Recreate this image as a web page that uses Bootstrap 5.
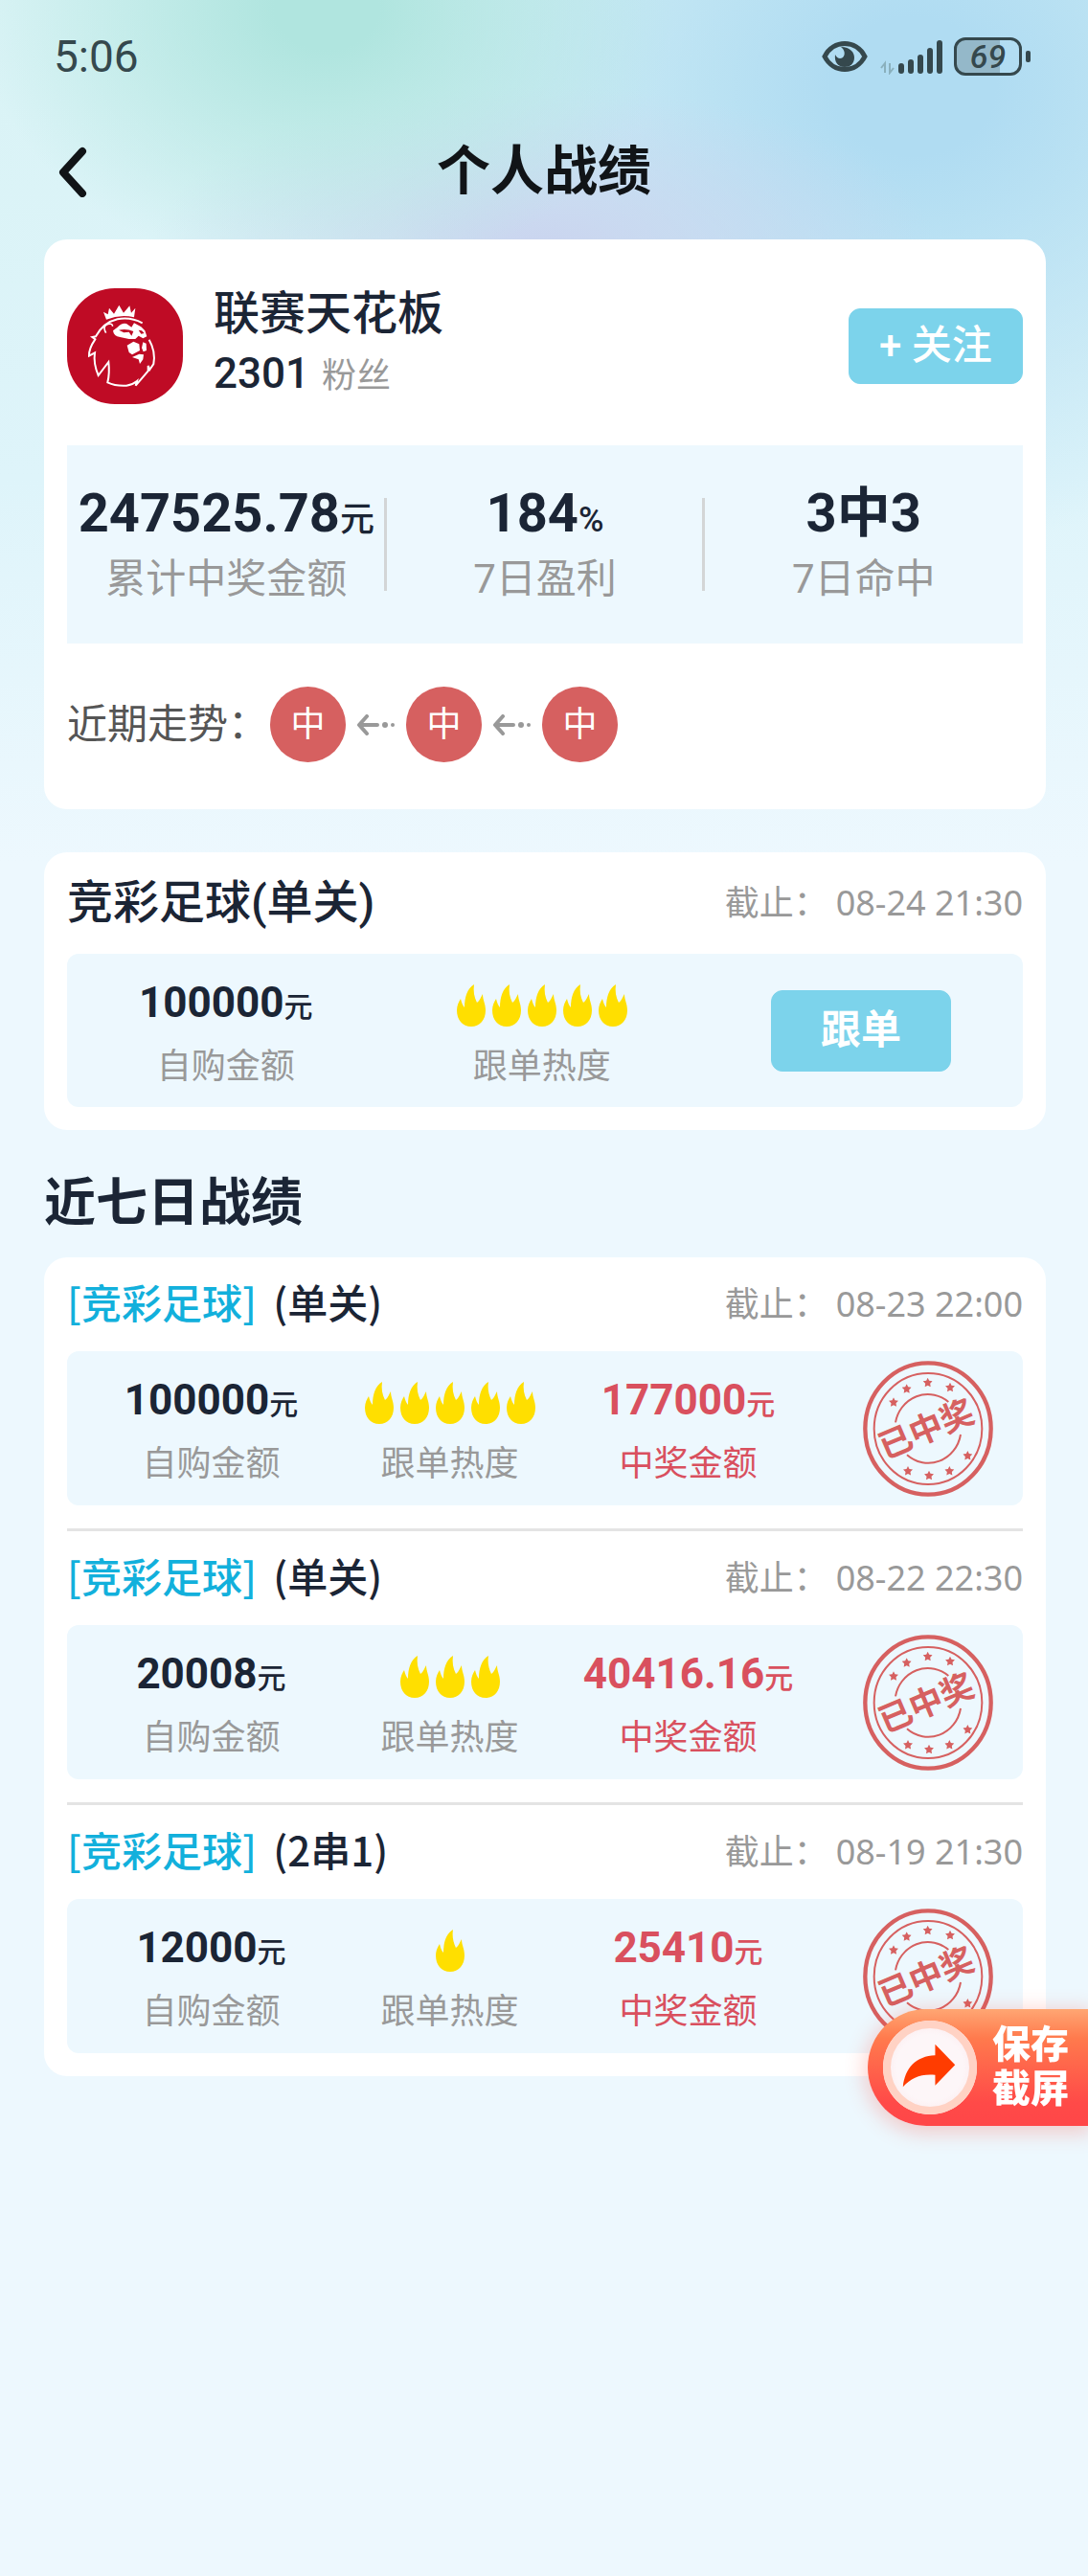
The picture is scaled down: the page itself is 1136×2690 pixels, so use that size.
<!DOCTYPE html>
<html lang="zh-CN">
  <head>
    <meta charset="UTF-8" />
    <meta name="viewport" content="width=device-width, initial-scale=1.0" />
    <title>个人战绩</title>
    <link
      href="https://cdn.jsdelivr.net/npm/bootstrap@5.3.0/dist/css/bootstrap.min.css"
      rel="stylesheet"
    />
    <style>
      body {
        font-family: Roboto, "Noto Sans CJK SC", sans-serif;
        font-size: 36px;
        line-height: 44px;
        color: #1b2535;
        background-color: #edf8fe;
        background-image:
          radial-gradient(ellipse 32% 280px at 30% 10px, #b0e5df 15%, #b0e5df00),
          radial-gradient(ellipse 36% 170px at 50% 260px, #cad5ef 5%, #cad5ef00),
          radial-gradient(ellipse 50% 480px at 84% 90px, #b0dcf2 15%, #b0dcf200),
          linear-gradient(#d9f3f5, #def4fa 500px, #edf8fe 900px);
        background-repeat: no-repeat;
        min-height: 100vh;
      }

      /* keeps the smaller or larger inline text from growing its line */
      .num small,
      .total-num small,
      .fans strong {
        line-height: 0;
      }

      /* status bar */
      .status-bar {
        height: 118px;
        padding: 0 60px 0 56px;
        color: #35484d;
      }

      .clock {
        font-size: 46px;
        line-height: 60px;
      }

      .battery {
        width: 71px;
        height: 40px;
        border: 3px solid #35484d;
        border-radius: 12px;
        background: linear-gradient(90deg, #94b8c9 70%, transparent 70%);
        font-size: 34px;
        line-height: 34px;
        font-weight: 500;
        font-style: italic;
      }

      .battery-tip {
        width: 5px;
        height: 12px;
        border-radius: 2px;
        background-color: #35484d;
      }

      /* title bar */
      .title-bar {
        height: 122px;
        padding: 0 58px;
        color: #111417;
      }

      .title-bar h1 {
        font-size: 56px;
        line-height: 70px;
        font-weight: 700;
      }

      .back-btn,
      .title-space {
        width: 36px;
      }

      main {
        padding: 10px 44px 0 46px;
      }

      .panel {
        background-color: #fff;
        border-radius: 24px;
        padding: 0 24px 24px;
      }

      .profile {
        padding-top: 46px;
        padding-bottom: 49px;
        margin-bottom: 45px;
      }

      .avatar {
        width: 121px;
        height: 121px;
        border-radius: 50px;
        background-color: #bf0b25;
      }

      .user-name {
        font-size: 48px;
        line-height: 64px;
        font-weight: 500;
      }

      .fans {
        line-height: 66px;
      }

      .fans strong {
        font-size: 44px;
        font-weight: 500;
      }

      .gray {
        color: #999;
      }

      .deadline {
        font-family: "Noto Sans", "Noto Sans CJK SC", sans-serif;
      }

      .btn-sky {
        --bs-btn-color: #fff;
        --bs-btn-bg: #7cd3eb;
        --bs-btn-border-color: #7cd3eb;
        --bs-btn-hover-color: #fff;
        --bs-btn-hover-bg: #63c8e4;
        --bs-btn-hover-border-color: #63c8e4;
        --bs-btn-border-radius: 12px;
        --bs-btn-padding-y: 0;
        --bs-btn-font-size: 42px;
        --bs-btn-line-height: 60px;
      }

      .follow-btn {
        width: 182px;
        height: 79px;
        font-weight: 500;
      }

      .order-btn {
        width: 188px;
        height: 85px;
        font-weight: 700;
      }

      /* three totals */
      .totals {
        height: 207px;
        margin: 39px 0 45px;
        padding-top: 38px;
        background-color: #edf8fe;
      }

      .total-num {
        font-size: 56px;
        line-height: 66px;
        font-weight: 700;
        margin-bottom: 12px;
      }

      .total-num small {
        font-size: 36px;
        font-weight: 500;
      }

      .total-label {
        font-size: 42px;
        line-height: 48px;
      }

      .split {
        width: 3px;
        height: 97px;
        margin: 17px -1px 0 -2px;
        background-color: #d3d5d6;
      }

      /* recent trend */
      .trend {
        color: #555;
        font-size: 42px;
      }

      .trend-label {
        margin-right: 2px;
      }

      .hit {
        width: 79px;
        height: 79px;
        background-color: #d66060;
        color: #fff;
        font-size: 36px;
      }

      .trend svg {
        margin: 0 12px;
      }

      .panel-head {
        height: 106px;
      }

      .panel-head h2 {
        font-size: 48px;
        line-height: 60px;
        font-weight: 500;
      }

      .info-box {
        background-color: #edf8fe;
        border-radius: 12px;
        height: 160px;
      }

      .info-box > div {
        padding-top: 5px;
      }

      .num {
        font-size: 44px;
        line-height: 50px;
        font-weight: 700;
        margin-bottom: 20px;
      }

      .num small {
        font-size: 30px;
        font-weight: 500;
      }

      .flames {
        height: 50px;
        gap: 7px;
        margin-bottom: 20px;
      }

      .section-title {
        font-size: 54px;
        line-height: 70px;
        font-weight: 700;
        padding: 42px 0 21px;
      }

      /* one row of the seven day list */
      .record {
        padding-bottom: 24px;
      }

      .record + .record {
        border-top: 3px solid #e4e4e4;
      }

      .record:last-child {
        padding-bottom: 0;
      }

      .record-head {
        height: 98px;
      }

      .record-head h3 {
        font-family: "Noto Sans CJK SC", sans-serif;
        font-size: 42px;
        line-height: 56px;
        font-weight: 500;
        padding-bottom: 6px;
      }

      .record-head h3 span {
        color: #12b0dc;
        margin-right: 8px;
      }

      .record-grid {
        display: grid;
        grid-template-columns: 1fr 1fr 1fr 194px;
        height: 161px;
        padding: 0 31px 0 26px;
      }

      .win {
        color: #d9505e;
      }

      /* floating save button */
      .save-btn {
        right: 0;
        bottom: 470px;
        width: 230px;
        height: 122px;
        padding: 0 0 0 16px;
        border: 0;
        border-radius: 61px 0 0 61px;
        background: linear-gradient(#ffa673, #ff7a4d 25%, #ff4a48 80%, #ff4648);
        box-shadow: 0 4px 20px 4px #ff503c40;
        color: #fff;
        font-size: 40px;
        line-height: 46px;
        font-weight: 900;
      }

      .save-btn svg {
        border-radius: 50%;
        background: radial-gradient(#fdf6f8 50%, #fbdcdf);
        box-shadow: inset 0 0 0 8px #ffd2c4;
      }
    </style>
  </head>
  <body>
    <svg class="d-none">
      <symbol id="flame" viewBox="0 0 30 44">
        <path fill="#ffdf00" d="M18 0C17 7 18 13 21 19C24 17 25 13 27 10C27 16 30 20 30 27C30 37 24 44 15 44C6 44 0 37 0 27C0 22 2 18 4 15C5 19 6 22 8 24C8 13 11 4 18 0Z" />
      </symbol>
      <symbol id="star" viewBox="-10 -10 20 20">
        <path fill="#d66060" d="M0-10L3-4L10-3L5 2L6 9L0 6L-6 9L-5 2L-10-3L-3-4Z" />
      </symbol>
      <symbol id="stamp" viewBox="62 33 408 426">
        <g fill="none" stroke="#d66060">
          <ellipse cx="266" cy="246" rx="197" ry="206" stroke-width="13" />
          <ellipse cx="266" cy="246" rx="169" ry="174" stroke-width="6" />
          <path stroke-width="6" d="M164 226A103 108 0 0 1 330 162M200 328A103 108 0 0 0 368 264" />
        </g>
        <use href="#star" x="143" y="148" width="30" height="30" />
        <use href="#star" x="184" y="106" width="30" height="30" />
        <use href="#star" x="250" y="86" width="30" height="30" />
        <use href="#star" x="320" y="101" width="30" height="30" />
        <use href="#star" x="375" y="315" width="30" height="30" />
        <use href="#star" x="318" y="363" width="30" height="30" />
        <use href="#star" x="254" y="377" width="30" height="30" />
        <use href="#star" x="188" y="363" width="30" height="30" />
        <text x="260" y="284" text-anchor="middle" transform="rotate(-23 260 247)" font-size="104" font-weight="700" fill="#d66060">已中奖</text>
      </symbol>
      <symbol id="arrow" viewBox="0 0 39 22">
        <path d="M10 2L2 11L10 20M3 11H21" fill="none" stroke="#999" stroke-width="4" stroke-linecap="round" stroke-linejoin="round" />
        <circle cx="29" cy="11" r="3" fill="#999" />
        <circle cx="37" cy="11" r="2" fill="#999" />
      </symbol>
    </svg>

    <div class="status-bar d-flex justify-content-between align-items-center">
      <span class="clock">5:06</span>
      <div class="d-flex align-items-center">
        <svg width="48" height="34" viewBox="0 0 48 34" class="me-2">
          <path d="M3 17C12 -1 36 -1 45 17C36 35 12 35 3 17Z" fill="none" stroke="#35484d" stroke-width="5" />
          <path d="M20 7C30 7 34 13 34 18C34 25 29 28 24 28C17 28 13 23 14 15C16 19 19 20 22 18C25 15 24 10 20 7Z" fill="#35484d" />
        </svg>
        <svg width="70" height="38" viewBox="0 0 70 38" class="me-2">
          <path d="M10 36V26L6 31M15 26V36L19 31" fill="none" stroke="#8ab0bd" stroke-width="2" />
          <path d="M27 34V29M37 34V25M47 34V20M57 34V13M67 34V5" stroke="#35484d" stroke-width="6" stroke-linecap="round" />
        </svg>
        <div class="battery text-center ms-1">69</div>
        <div class="battery-tip ms-1"></div>
      </div>
    </div>

    <header class="title-bar d-flex justify-content-between align-items-center">
      <button type="button" class="back-btn btn p-0 border-0 text-start" aria-label="返回">
        <svg width="36" height="54" viewBox="0 0 36 54" class="d-block">
          <path d="M28 6L8 28L28 50" fill="none" stroke="#111417" stroke-width="8" stroke-linecap="round" stroke-linejoin="round" />
        </svg>
      </button>
      <h1 class="m-0">个人战绩</h1>
      <span class="title-space"></span>
    </header>

    <main>
      <section class="panel profile">
        <div class="d-flex align-items-center">
          <svg class="avatar" viewBox="30 27 363 363">
            <path fill="#fff" d="M144 101L158 109L162 89L177 107L193 80L207 104L226 82L231 104L244 89L240 118Q196 108 153 125Z" />
            <path fill="none" stroke="#fff" stroke-width="6" stroke-linejoin="miter" d="M266 136Q228 116 188 124Q144 134 120 178L109 180L118 187Q98 216 99 239L117 229Q112 262 128 300L160 258Q164 292 157 322Q182 334 216 332Q236 329 249 318L245 332L284 286V270L289 282L301 264Q308 224 287 188" />
            <path fill="none" stroke="#fff" stroke-width="5" d="M152 167Q138 142 164 138Q174 140 172 146" />
            <path fill="#fff" fill-rule="evenodd" d="M174 160L188 149Q202 134 216 138L232 149L240 136L262 148L274 160L280 178L268 184L254 176L244 186H224L196 180Q176 178 174 160ZM192 158L208 166L224 164L232 176L238 162Q216 152 192 158ZM254 158L262 170L272 168L264 160Z" />
            <path fill="#fff" d="M218 206L238 194L256 202L258 222L234 235L224 228ZM268 196L278 200L279 222L269 226L264 214ZM234 243L256 233L270 235L268 250L258 264L254 250Z" />
          </svg>
          <div class="ms-4 ps-2 flex-grow-1">
            <div class="user-name">联赛天花板</div>
            <div class="fans"><strong>2301</strong> <span class="gray ms-1">粉丝</span></div>
          </div>
          <button type="button" class="btn btn-sky follow-btn">+ 关注</button>
        </div>

        <div class="totals d-flex text-center">
          <div class="col">
            <div class="total-num">247525.78<small>元</small></div>
            <div class="total-label gray">累计中奖金额</div>
          </div>
          <div class="split"></div>
          <div class="col">
            <div class="total-num">184<small>%</small></div>
            <div class="total-label gray">7日盈利</div>
          </div>
          <div class="split"></div>
          <div class="col">
            <div class="total-num">3中3</div>
            <div class="total-label gray">7日命中</div>
          </div>
        </div>

        <div class="trend d-flex align-items-center">
          <span class="trend-label">近期走势：</span>
          <span class="hit rounded-circle d-flex align-items-center justify-content-center">中</span>
          <svg width="39" height="22"><use href="#arrow" /></svg>
          <span class="hit rounded-circle d-flex align-items-center justify-content-center">中</span>
          <svg width="39" height="22"><use href="#arrow" /></svg>
          <span class="hit rounded-circle d-flex align-items-center justify-content-center">中</span>
        </div>
      </section>

      <section class="panel">
        <div class="panel-head d-flex justify-content-between align-items-center">
          <h2 class="m-0">竞彩足球(单关)</h2>
          <span class="deadline gray">截止：<time class="ms-2">08-24 21:30</time></span>
        </div>
        <div class="info-box d-flex justify-content-around align-items-center text-center">
          <div>
            <div class="num">100000<small>元</small></div>
            <div class="gray">自购金额</div>
          </div>
          <div>
            <div class="flames d-flex justify-content-center align-items-end">
              <svg width="30" height="44"><use href="#flame" /></svg>
              <svg width="30" height="44"><use href="#flame" /></svg>
              <svg width="30" height="44"><use href="#flame" /></svg>
              <svg width="30" height="44"><use href="#flame" /></svg>
              <svg width="30" height="44"><use href="#flame" /></svg>
            </div>
            <div class="gray">跟单热度</div>
          </div>
          <button type="button" class="btn btn-sky order-btn">跟单</button>
        </div>
      </section>

      <h2 class="section-title m-0">近七日战绩</h2>

      <section class="panel">
        <article class="record">
          <div class="record-head d-flex justify-content-between align-items-center">
            <h3 class="m-0"><span>[竞彩足球]</span> (单关)</h3>
            <span class="deadline gray">截止：<time class="ms-2">08-23 22:00</time></span>
          </div>
          <div class="info-box record-grid align-items-center text-center">
            <div>
              <div class="num">100000<small>元</small></div>
              <div class="gray">自购金额</div>
            </div>
            <div>
              <div class="flames d-flex justify-content-center align-items-end">
                <svg width="30" height="44"><use href="#flame" /></svg>
                <svg width="30" height="44"><use href="#flame" /></svg>
                <svg width="30" height="44"><use href="#flame" /></svg>
                <svg width="30" height="44"><use href="#flame" /></svg>
                <svg width="30" height="44"><use href="#flame" /></svg>
              </div>
              <div class="gray">跟单热度</div>
            </div>
            <div class="win">
              <div class="num">177000<small>元</small></div>
              <div>中奖金额</div>
            </div>
            <svg class="ms-auto" width="136" height="142"><use href="#stamp" /></svg>
          </div>
        </article>

        <article class="record">
          <div class="record-head d-flex justify-content-between align-items-center">
            <h3 class="m-0"><span>[竞彩足球]</span> (单关)</h3>
            <span class="deadline gray">截止：<time class="ms-2">08-22 22:30</time></span>
          </div>
          <div class="info-box record-grid align-items-center text-center">
            <div>
              <div class="num">20008<small>元</small></div>
              <div class="gray">自购金额</div>
            </div>
            <div>
              <div class="flames d-flex justify-content-center align-items-end">
                <svg width="30" height="44"><use href="#flame" /></svg>
                <svg width="30" height="44"><use href="#flame" /></svg>
                <svg width="30" height="44"><use href="#flame" /></svg>
              </div>
              <div class="gray">跟单热度</div>
            </div>
            <div class="win">
              <div class="num">40416.16<small>元</small></div>
              <div>中奖金额</div>
            </div>
            <svg class="ms-auto" width="136" height="142"><use href="#stamp" /></svg>
          </div>
        </article>

        <article class="record">
          <div class="record-head d-flex justify-content-between align-items-center">
            <h3 class="m-0"><span>[竞彩足球]</span> (2串1)</h3>
            <span class="deadline gray">截止：<time class="ms-2">08-19 21:30</time></span>
          </div>
          <div class="info-box record-grid align-items-center text-center">
            <div>
              <div class="num">12000<small>元</small></div>
              <div class="gray">自购金额</div>
            </div>
            <div>
              <div class="flames d-flex justify-content-center align-items-end">
                <svg width="30" height="44"><use href="#flame" /></svg>
              </div>
              <div class="gray">跟单热度</div>
            </div>
            <div class="win">
              <div class="num">25410<small>元</small></div>
              <div>中奖金额</div>
            </div>
            <svg class="ms-auto" width="136" height="142"><use href="#stamp" /></svg>
          </div>
        </article>
      </section>
    </main>

    <button type="button" class="save-btn position-fixed d-flex align-items-center">
      <svg width="98" height="98" viewBox="245 450 297 297">
        <path fill="#ff3c00" d="M308 660C314 600 350 562 410 560V525L473 590L410 655V622C365 618 335 630 308 660Z" />
      </svg>
      <span class="ms-3">保存<br />截屏</span>
    </button>

    <script src="https://cdn.jsdelivr.net/npm/bootstrap@5.3.0/dist/js/bootstrap.bundle.min.js"></script>
  </body>
</html>
